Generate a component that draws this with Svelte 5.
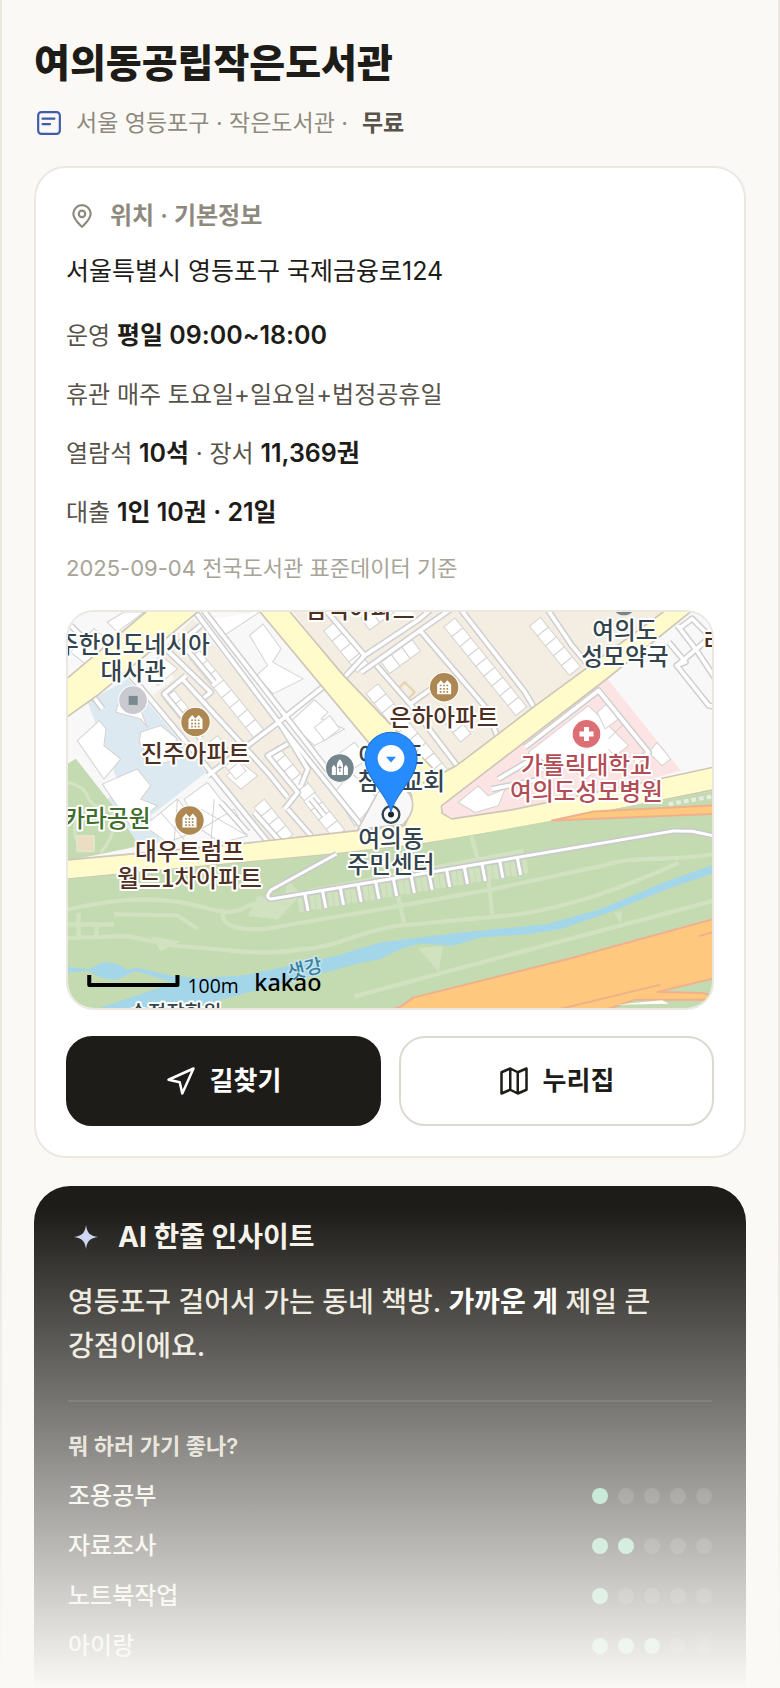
<script lang="ts">
  const purposes = [
    { name: '조용공부', score: 1 },
    { name: '자료조사', score: 2 },
    { name: '노트북작업', score: 1 },
    { name: '아이랑', score: 3 },
  ];

  // map streets, 3 units per pixel
  const streets = [
    'M376 -10L640 340L880 640',
    'M404 -10L668 330L800 500',
    'M790 205L626 335L420 490',
    'M190 190L440 490L610 700',
    'M300 115L430 240L410 256',
    'M400 40L340 90L440 210',
    'M356 190L290 245L400 380',
    'M344 200L600 480L660 555',
    'M660 395L600 430L690 540L650 590',
    'M640 340L720 470L700 520',
    'M770 -10L890 130L830 195',
    'M890 130L1056 20L1090 -10',
    'M880 180L1056 55L1150 -10',
    'M1056 55L1256 290L1286 370',
    'M1176 -10L1370 240L1396 284',
    'M1436 -10L1510 100L1560 160',
    'M926 160L1026 275L1166 459',
    'M1026 275L1090 230',
    'M1370 405L1590 235L1740 420L1700 450',
    'M1290 500L1400 435L1440 470',
    'M1270 530L1420 500',
    'M80 255L106 290',
    'M0 30L50 80',
    'M40 180L200 40',
    'M1800 90L1850 150L1824 160L1920 280L1940 284',
    'M1826 40L1880 110L1940 200',
    'M1930 70L1826 160',
    'M1830 50L1870 20L1930 80',
    'M460 570L540 660',
    'M660 590L730 670',
    'M560 600L640 690',
    'M730 560L770 610',
  ];

  // rows of apartment blocks: start, angle, count, block size
  const rows = [
    { x: 396, y: 115, angle: 51, n: 8, w: 38, h: 38 },
    { x: 320, y: 235, angle: 51, n: 4, w: 34, h: 40 },
    { x: 450, y: 370, angle: 51, n: 4, w: 34, h: 40 },
    { x: 800, y: 30, angle: 51, n: 4, w: 40, h: 42 },
    { x: 630, y: 400, angle: 51, n: 5, w: 36, h: 42 },
    { x: 590, y: 560, angle: 51, n: 4, w: 34, h: 40 },
    { x: 740, y: 540, angle: 51, n: 4, w: 36, h: 42 },
    { x: 1160, y: 18, angle: 51, n: 9, w: 38, h: 42 },
    { x: 1416, y: 16, angle: 51, n: 5, w: 38, h: 42 },
    { x: 1140, y: 280, angle: 51, n: 3, w: 36, h: 40 },
    { x: 930, y: 215, angle: 51, n: 9, w: 38, h: 46 },
    { x: 880, y: 20, angle: -36, n: 3, w: 38, h: 42 },
    { x: 940, y: 150, angle: -36, n: 3, w: 38, h: 42 },
  ];

  const teeth = Array.from({ length: 13 }, (_, i) => ({ x: 711 + i * 53, y: 849 - i * 9 }));
  const apartments = [[384, 329], [1128, 225], [366, 624]];
</script>

<div class="page">
  <header>
    <h1>여의동공립작은도서관</h1>
    <p class="sub">
      <svg class="doc" viewBox="0 0 24 24" aria-hidden="true">
        <rect x="2" y="2" width="20" height="20" rx="3" />
        <path d="M6 8h11M6 13h7" />
      </svg>
      <span>서울 영등포구 · 작은도서관 ·</span>
      <b>무료</b>
    </p>
  </header>

  <section class="card">
    <h2>
      <svg viewBox="0 0 24 24" aria-hidden="true">
        <path d="M12 22c-3-3-8-7-8-12a8 8 0 0 1 16 0c0 5-5 9-8 12z" />
        <circle cx="12" cy="10" r="3" />
      </svg>
      위치 · 기본정보
    </h2>
    <p class="address">서울특별시 영등포구 국제금융로124</p>
    <p class="row">운영 <b>평일 09:00~18:00</b></p>
    <p class="row">휴관 매주 토요일+일요일+법정공휴일</p>
    <p class="row">열람석 <b>10석</b> · 장서 <b>11,369권</b></p>
    <p class="row">대출 <b>1인 10권 · 21일</b></p>
    <p class="source">2025-09-04 전국도서관 표준데이터 기준</p>

    <div class="map">
      <svg viewBox="0 0 1932 1185" preserveAspectRatio="xMidYMid slice" role="img" aria-label="지도">
        <rect width="1932" height="1185" fill="#f8f8f8" />

        <!-- districts -->
        <path fill="#f3ede2" d="M256 249L320 200L276 119L376 20L640 340L880 650L590 690L440 490Z" />
        <path fill="#f3ede2" d="M676 0L826 189L966 354L1120 495L1166 459L1396 284L1796 0Z" />
        <path fill="#dce9f1" d="M61 269L181 200L416 480L250 610L280 690L200 700L120 560L160 530Z" />
        <path fill="#c4dab0" d="M0 455L26 439L136 579L216 700L0 745Z" />
        <g fill="none" stroke="#d3e3c3" stroke-width="10">
          <path d="M0 510Q50 520 60 550T110 590M50 590Q0 650 40 700M130 590Q160 650 100 720" />
        </g>
        <rect x="30" y="670" width="50" height="46" fill="#ecdcc0" stroke="#e2e6c8" stroke-width="6" />
        <path fill="#fde4e4" d="M1616 199L1836 474L1746 500L1330 590L1160 618L1120 600L1130 570Z" />

        <!-- buildings -->
        <g fill="#fff" stroke="#d5d3d2" stroke-width="3">
          <path d="M546 70L586 36L640 110L615 150L706 200L616 245L566 190L600 160Z" />
          <path d="M666 330L740 262L780 300L760 320L830 350L740 400Z" />
          <path d="M740 345L786 310L816 350L770 385Z" />
          <path d="M440 20L470 70L576 0M450 0L600 -60" />
          <path d="M30 385L96 325L116 350L110 400L160 440L110 500Z" />
          <path d="M105 515L210 470L250 520L220 560L270 580L190 640Z" />
          <path d="M150 280L210 270L240 345L220 320L146 300Z" />
          <path d="M220 360L280 340L330 380L300 410L330 440L260 460L216 390Z" />
          <path d="M350 560L420 510L490 600L400 650Z" />
          <path d="M476 490L520 450L570 490L520 530Z" />
          <path d="M236 170L280 130L330 170L270 220Z" />
          <path d="M10 120L80 50L130 90L60 160Z" />
          <path d="M120 30L170 0L230 0L150 60Z" />
          <path d="M800 540L850 480L930 560L860 640Z" />
          <path d="M790 440L860 390L900 440L840 480Z" />
          <path d="M230 640L330 560L400 650L300 690ZM280 600L350 680M330 560L320 690M400 650L500 590L540 670L460 690ZM400 590L540 670M440 560L430 690" />
          <path d="M1380 420L1560 280L1680 400L1550 500L1480 450L1420 480Z" />
          <path d="M1586 300L1620 270L1650 320L1610 350ZM1620 380L1670 330M1660 460L1620 410" />
          <path d="M1740 420L1765 390L1806 440L1780 460Z" />
          <path d="M1170 570L1230 520L1260 550L1310 530L1290 580L1220 600Z" />
          {#each rows as r}
            <g transform="translate({r.x} {r.y}) rotate({r.angle})">
              {#each Array(r.n) as _, i}
                <rect x={i * r.w} y="0" width={r.w} height={r.h} />
              {/each}
            </g>
          {/each}
        </g>
        <path d="M990 230L1010 210L1040 240L1020 260Z" fill="none" stroke="#e8d5b0" stroke-width="7" />

        <g fill="none" stroke="#cfcfd1" stroke-width="20" stroke-linejoin="round">
          {#each streets as d}<path {d} />{/each}
        </g>
        <g fill="none" stroke="#fff" stroke-width="11" stroke-linejoin="round">
          {#each streets as d}<path {d} />{/each}
        </g>

        <!-- main roads -->
        <g fill="#fffbca" stroke="#cfc6b8" stroke-width="5">
          <path d="M-9 206L246 -9L401 -9L90 250L-9 320Z" />
          <path d="M570 -9L1030 545L1120 495L826 189L660 -9Z" />
          <path d="M-9 743L516 694L866 654L1010 640L1032 590L1030 530L1166 459L1396 284L1796 -9L1876 -9L1616 199L1120 580L1122 602L1151 619L1330 592L1746 505L1945 462L1945 530L1451 630L1066 694L806 724L-9 800Z" />
        </g>
        <path fill="#fffbca" d="M950 395L1080 530L1180 450L1180 530L1110 575L1040 560Z" />
        <path fill="#f8f8f8" stroke="#cfcac6" stroke-width="5" d="M870 650L930 540Q990 500 1025 545Q1050 590 1005 636Z" />

        <!-- riverside park -->
        <path fill="#c4dab0" d="M0 799L806 724L1066 694L1451 624L1932 535V1185H0Z" />
        <path d="M1800 575L1932 552" stroke="#e7ebe3" stroke-width="12" stroke-dasharray="14 9" />
        <g fill="none" stroke="#d1e2c1" stroke-width="13">
          <path d="M0 890C100 870 200 850 320 866S470 920 540 880L640 850" />
          <path d="M140 905L330 908L390 948" />
          <path d="M470 890C440 950 560 960 640 940L936 890L1270 830L1600 760C1700 725 1800 750 1936 724" />
          <path d="M0 975L180 970L330 1000C500 1010 560 1030 700 1010C820 1000 860 960 980 940L1350 905C1520 880 1700 810 1830 750" />
          <path d="M860 1150C1200 1060 1640 940 1936 864" />
          <path d="M1210 670L1228 740M1260 790L1272 905M990 850L1008 930M34 900V970M88 935V970M0 935H140" />
        </g>
        <path fill="#d1e2c1" d="M540 910L570 850L650 860L660 800L700 846L630 920ZM250 970L340 985L280 1015ZM1050 1005L1124 1000L1112 1078ZM1636 900L1660 895L1658 934Z" />
        <g fill="#d1e2c1">
          <path d="M720 830L1366 708L1366 722L726 846Z" />
          {#each teeth as t}
            <path d="M{t.x - 22} {t.y + 8}l14 -2l6 42l-14 2zM{t.x + 14} {t.y}l14 -2l6 42l-14 2z" />
          {/each}
        </g>
        <path fill="#a4d6ea" d="M0 1062L66 1068L106 1049Q150 1045 180 1072L206 1064L316 1089L400 1096L536 1086L806 1029L936 989L1176 959L1436 934L1596 889L1786 809L1945 752V778L1796 829L1636 894L1476 949L1376 964L1236 974L1156 999L1056 992L996 1009L936 1039L876 1050L676 1104L366 1185H96L320 1110L206 1074L150 1100Q110 1105 66 1074L0 1078Z" />
        <g fill="none" stroke="#c9c9cd" stroke-width="18" stroke-linejoin="round">
          <path d="M806 724L610 832Q590 856 611 859L936 804L1816 655L1870 656L1945 672" />
          {#each teeth as t}<path d="M{t.x} {t.y - 6}l10 54" />{/each}
        </g>
        <g fill="none" stroke="#fff" stroke-width="9" stroke-linejoin="round">
          <path d="M806 724L610 832Q590 856 611 859L936 804L1816 655L1870 656L1945 672" />
          {#each teeth as t}<path d="M{t.x} {t.y - 6}l10 52" />{/each}
        </g>
        <g fill="#fec97e" stroke="#f1b08d" stroke-width="6">
          <path d="M1451 624L1576 597L1945 578V604Z" />
          <path d="M960 1194L1000 1180L1036 1154L1496 1039L1945 916V1094L1766 1137L1900 1140L1945 1150L1945 1160L1700 1160L1600 1194Z" />
          <path d="M1466 1190L1776 1115M1890 970L1945 955" fill="none" />
        </g>
        <path fill="#fff" d="M1640 1175L1780 1162L1800 1172Z" />

        <!-- markers -->
        {#each apartments as [x, y]}
          <g transform="translate({x} {y})">
            <circle r="44" fill="#ad8852" stroke="#fff" stroke-width="3" />
            <path fill="#fff" d="M-21 21V-8L-10 -21L0 -10L10 -21L21 -8V21Z" />
            <path stroke="#ad8852" stroke-width="5" stroke-dasharray="5 5" d="M-13 -5H16M-13 5H16M-13 14H16" />
          </g>
        {/each}
        <circle cx="197" cy="264" r="43" fill="#c9cacf" stroke="#fff" stroke-width="3" />
        <rect x="184" y="251" width="27" height="27" fill="#7a898f" />
        <g transform="translate(816 467)">
          <circle r="43" fill="#75858c" stroke="#fff" stroke-width="3" />
          <path fill="#fff" d="M-24 21V-2L-18 -10L-12 -2V21ZM12 21V-2L18 -10L24 -2V21ZM-9 21V-8Q-8 -20 0 -26Q8 -20 9 -8V21Z" />
          <path stroke="#75858c" stroke-width="3" d="M0 -8V12M-5 -2H5" />
        </g>
        <circle cx="1666" cy="-26" r="36" fill="#75858c" />
        <g transform="translate(1554 365)">
          <circle r="43" fill="#dc6f74" stroke="#fff" stroke-width="3" />
          <path stroke="#fff" stroke-width="15" d="M-21 0H21M0 -21V21" />
        </g>

        <g class="labels" text-anchor="middle">
          <g fill="#33444c">
            <text x="198" y="124">주한인도네시아</text>
            <text x="198" y="204">대사관</text>
            <text x="1669" y="80">여의도</text>
            <text x="1669" y="160">성모약국</text>
            <text x="969" y="454">여의도</text>
            <text x="1000" y="534">참빛교회</text>
            <text x="969" y="702">여의동</text>
            <text x="969" y="782">주민센터</text>
            <text class="small" x="324" y="1222">수정장학원</text>
          </g>
          <g fill="#4e3022">
            <text x="384" y="449">진주아파트</text>
            <text x="1128" y="341">은하아파트</text>
            <text x="366" y="742">대우트럼프</text>
            <text x="366" y="822">월드1차아파트</text>
            <text x="876" y="19">삼익아파트</text>
            <text x="1936" y="114">리</text>
          </g>
          <g fill="#b34d55">
            <text x="1554" y="484">가톨릭대학교</text>
            <text x="1554" y="564">여의도성모병원</text>
          </g>
          <text x="86" y="642" fill="#3f6d2c">앙카라공원</text>
          <text class="river" transform="translate(716 1088) rotate(-14)" fill="#38809c">샛강</text>
        </g>

        <circle cx="969" cy="606" r="25" fill="#fff" stroke="#33444c" stroke-width="7" />
        <circle cx="969" cy="606" r="9" fill="#1c2529" />
        <path fill="#268bfd" stroke="#1b6fd2" stroke-width="3" d="M969 600C960 545 891 500 891 438A78 78 0 0 1 1047 438C1047 500 978 545 969 600Z" />
        <circle cx="969" cy="438" r="40" fill="#fff" />
        <path fill="#268bfd" d="M954 433H984L969 450Z" />

        <path d="M66 1086V1116H330V1086" fill="none" stroke="#000" stroke-width="12" />
        <text class="scale" x="360" y="1140">100m</text>
        <text class="brand" x="560" y="1134">kakao</text>
      </svg>
    </div>

    <div class="actions">
      <button class="primary">
        <svg viewBox="0 0 24 24" aria-hidden="true"><path d="M22 2L2 11l9 2 2 9z" /></svg>
        길찾기
      </button>
      <button>
        <svg viewBox="0 0 24 24" aria-hidden="true"><path d="M2 5l7-3 6 3 7-3v17l-7 3-6-3-7 3zM9 2v17M15 5v17" /></svg>
        누리집
      </button>
    </div>
  </section>

  <section class="insight">
    <h2>
      <svg viewBox="0 0 24 24" aria-hidden="true">
        <path d="M12 0c1 8 4 11 12 12-8 1-11 4-12 12-1-8-4-11-12-12 8-1 11-4 12-12z" />
      </svg>
      AI 한줄 인사이트
    </h2>
    <p class="quote">영등포구 걸어서 가는 동네 책방. <b>가까운 게</b> 제일 큰 강점이에요.</p>
    <h3>뭐 하러 가기 좋나?</h3>
    <ul>
      {#each purposes as item}
        <li>
          {item.name}
          <span class="dots">
            {#each Array(5) as _, i}
              <i class:on={i < item.score}></i>
            {/each}
          </span>
        </li>
      {/each}
    </ul>
  </section>
  <div class="fade"></div>
</div>

<style>
  :global(body) {
    background: #faf9f5;
  }

  .page {
    position: relative;
    display: flex;
    flex-direction: column;
    box-sizing: border-box;
    min-height: 100vh;
    padding: 33px 32px 0;
    border: 2px solid #eae8e1;
    border-width: 0 2px;
    background: #faf9f5;
    color: #1e1c18;
    font-family: Inter, "Noto Sans CJK KR", sans-serif;
    font-size: 24px;
    line-height: 36px;
    word-break: keep-all;
  }

  h1, h2, h3, p, ul {
    margin: 0;
    padding: 0;
    font-size: inherit;
  }

  svg {
    flex: none;
    fill: none;
    stroke: currentColor;
    stroke-width: 2;
    stroke-linejoin: round;
    stroke-linecap: round;
  }

  h1 {
    font-size: 39px;
    line-height: 60px;
    font-weight: 800;
  }

  .sub {
    display: flex;
    align-items: center;
    gap: 14px;
    margin: 12px 0 25px;
    font-size: 23px;
    color: #8e897d;
  }

  .sub .doc {
    width: 26px;
    height: 26px;
    margin-left: 2px;
    color: #3f5bab;
  }

  .sub b {
    font-weight: 600;
    color: #57534a;
  }

  .card {
    padding: 30px;
    border: 2px solid #eae8e1;
    border-radius: 32px;
    background: #fff;
  }

  .card h2 {
    display: flex;
    align-items: center;
    gap: 15px;
    font-weight: 600;
    color: #8e897d;
  }

  .card h2 svg {
    width: 26px;
    height: 26px;
    margin-left: 3px;
  }

  .address {
    margin: 15px 0 23px;
    font-size: 25px;
    line-height: 44px;
  }

  .row {
    margin-bottom: 20px;
    line-height: 39px;
    color: #57534a;
  }

  .row b {
    font-size: 25px;
    font-weight: 600;
    color: #1e1c18;
  }

  .source {
    font-size: 22px;
    line-height: 32px;
    color: #a8a397;
  }

  .map {
    height: 396px;
    margin-top: 26px;
    overflow: hidden;
    border: 2px solid #eae8e1;
    border-radius: 28px;
  }

  .map svg {
    display: block;
    width: 100%;
    height: 100%;
    stroke: none;
    stroke-linecap: butt;
  }

  .labels {
    font-family: "Noto Sans CJK KR", sans-serif;
    font-size: 71px;
    font-weight: 500;
    stroke: #fff;
    stroke-width: 12px;
    paint-order: stroke;
  }

  .labels .small {
    font-size: 60px;
  }

  .labels .river {
    font-size: 57px;
    stroke: #c9e6f0;
    stroke-width: 8px;
  }

  .scale {
    fill: #000;
    font-family: "Open Sans", sans-serif;
    font-size: 58px;
  }

  .brand {
    fill: #000;
    font-family: "Noto Sans", sans-serif;
    font-size: 70px;
    font-weight: 500;
  }

  .actions {
    display: grid;
    grid-template-columns: 1fr 1fr;
    gap: 18px;
    margin-top: 26px;
  }

  button {
    display: flex;
    align-items: center;
    justify-content: center;
    gap: 14px;
    height: 90px;
    border: 2px solid #dcdad0;
    border-radius: 26px;
    background: #fff;
    color: #1e1c18;
    font: 600 26px/36px Inter, "Noto Sans CJK KR", sans-serif;
  }

  button svg {
    width: 30px;
    height: 30px;
  }

  .primary {
    border-color: #1e1c18;
    background: #1e1c18;
    color: #fff;
  }

  .insight {
    flex: 1;
    margin-top: 28px;
    padding: 30px 34px 0;
    border-radius: 36px 36px 0 0;
    background: #1e1c18;
    color: #f5f2ea;
  }

  .insight h2 {
    display: flex;
    align-items: center;
    gap: 20px;
    font-size: 28px;
    line-height: 42px;
    font-weight: 700;
  }

  .insight h2 svg {
    width: 24px;
    height: 24px;
    margin-left: 6px;
    fill: #cbd5f3;
    stroke: none;
  }

  .quote {
    margin-top: 22px;
    padding-bottom: 32px;
    border-bottom: 2px solid #33312d;
    font-size: 28px;
    line-height: 44px;
    font-weight: 500;
    color: #ece8dd;
  }

  .quote b {
    font-weight: 700;
    color: #fff;
  }

  h3 {
    margin-top: 26px;
    font-size: 22px;
    line-height: 36px;
    font-weight: 600;
    color: #d9d4c6;
  }

  ul {
    margin-top: 7px;
    list-style: none;
  }

  li {
    display: flex;
    align-items: center;
    justify-content: space-between;
    height: 50px;
    font-weight: 500;
  }

  .dots {
    display: flex;
    gap: 10px;
  }

  .dots i {
    width: 16px;
    height: 16px;
    border-radius: 50%;
    background: #3c3a36;
  }

  .dots .on {
    background: #7fd3ab;
  }

  .fade {
    position: absolute;
    inset: auto -2px 0;
    height: 480px;
    background: linear-gradient(rgba(250, 249, 245, 0), #faf9f5);
  }
</style>
